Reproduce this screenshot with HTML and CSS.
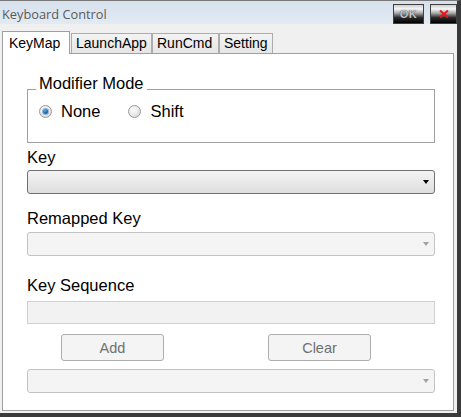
FILE: index.html
```html
<!DOCTYPE html>
<html>
<head>
<meta charset="utf-8">
<link rel="stylesheet" href="styles.css">
</head>
<body>
<div class="window">
  <div class="titlebar">
    <span class="title">Keyboard Control</span>
    <div class="tbtns">
      <button class="tbtn ok">OK</button>
      <button class="tbtn close"><svg width="10" height="8" viewBox="0 0 10 8"><path d="M1 0.5 L9 7.5 M9 0.5 L1 7.5" stroke="#e8141a" stroke-width="2"/></svg></button>
    </div>
  </div>
  <div class="client">
    <div class="tabs">
      <div class="tab active">KeyMap</div>
      <div class="tab t-launch">LaunchApp</div>
      <div class="tab t-run">RunCmd</div>
      <div class="tab t-set">Setting</div>
    </div>
    <div class="panel">
      <fieldset class="group">
        <legend class="legend">Modifier Mode</legend>
        <div class="radios">
          <label class="radio first"><span class="dot on"></span>None</label>
          <label class="radio"><span class="dot"></span>Shift</label>
        </div>
      </fieldset>
      <div class="label l-key">Key</div>
      <div class="combo active-combo c-key"><span class="arrow"></span></div>
      <div class="label l-remap">Remapped Key</div>
      <div class="combo disabled c-remap"><span class="arrow"></span></div>
      <div class="label l-seq">Key Sequence</div>
      <div class="textbox"></div>
      <div class="btnrow">
        <button class="btn">Add</button>
        <button class="btn">Clear</button>
      </div>
      <div class="combo disabled c-bottom"><span class="arrow"></span></div>
    </div>
  </div>
</div>
</body>
</html>
```
FILE: styles.css
```css
html, body {
  margin: 0;
  padding: 0;
  background: #f0f0f0;
}
.window {
  width: 461px;
  height: 417px;
  box-sizing: border-box;
  border-top: 1px solid #7a7a7a;
  border-right: 4px solid #3a3a3a;
  border-bottom: 4px solid #3a3a3a;
  background: #f0f0f0;
  display: flex;
  flex-direction: column;
  overflow: hidden;
  font-family: "Liberation Sans", Arial, sans-serif;
}
.titlebar {
  height: 23px;
  flex: none;
  display: flex;
  justify-content: space-between;
  align-items: flex-start;
  background: linear-gradient(to bottom, #d6e1ec, #e2eaf3);
  padding-left: 2px;
}
.title {
  font-family: "Open Sans", sans-serif;
  font-size: 12.8px;
  line-height: 16px;
  color: #5a5a5a;
  margin-top: 5px;
}
.tbtns {
  display: flex;
  gap: 6px;
  margin-top: 3px;
}
.tbtn {
  height: 20px;
  padding: 0;
  margin: 0;
  border: 1px solid #404040;
  background: linear-gradient(to bottom, #cfcfcf 0%, #f6f6f6 22%, #a8a8a8 45%, #2a2a2a 70%, #000 100%);
  display: flex;
  align-items: center;
  justify-content: center;
}
.ok {
  width: 31px;
  font-family: "Liberation Sans", Arial, sans-serif;
  font-weight: bold;
  font-size: 11px;
  color: #c4c4c4;
  letter-spacing: 0.5px;
  text-shadow: 0 0 1px #222;
}
.close {
  width: 27px;
}
.client {
  flex: 1;
  display: flex;
  flex-direction: column;
  padding: 7px 3px 2px 2px;
}
.tabs {
  display: flex;
  align-items: flex-end;
  height: 22px;
  flex: none;
}
.tab {
  box-sizing: border-box;
  height: 20px;
  font-size: 14px;
  line-height: 18px;
  color: #000;
  border: 1px solid #acacac;
  border-bottom: none;
  background: linear-gradient(to bottom, #f3f3f3, #e6e6e6);
  padding: 0 0 0 4px;
  white-space: nowrap;
}
.t-launch { width: 81px; }
.t-run { width: 67px; }
.t-set { width: 54px; }
.tab.active {
  width: 68px;
  height: 23px;
  background: #fff;
  border-color: #a0a0a0;
  padding: 2px 0 0 6px;
  margin-right: 1px;
  margin-bottom: -1px;
  position: relative;
  z-index: 1;
}
.panel {
  flex: 1;
  background: #fff;
  border: 1px solid #a0a0a0;
  padding: 0 18px 0 24px;
  display: flex;
  flex-direction: column;
}
.group {
  margin: 20px 0 0 0;
  padding: 0 0 23px 11px;
  border: 1px solid #a0a0a0;
  min-width: 0;
}
.legend {
  font-size: 16.5px;
  line-height: 19px;
  padding: 0 3px 11px 3px;
  margin-left: -3px;
  color: #000;
}
.radios {
  display: flex;
  align-items: center;
  height: 15px;
}
.radio {
  display: flex;
  align-items: center;
  font-size: 16.5px;
  line-height: 19px;
  color: #000;
}
.radio.first {
  margin-right: 28px;
}
.dot {
  width: 13px;
  height: 13px;
  box-sizing: border-box;
  border-radius: 50%;
  border: 1px solid #9a9a9a;
  background: radial-gradient(circle at 40% 35%, #fdfdfd 0%, #e6e6e6 55%, #cfcfcf 100%);
  margin-right: 9px;
  display: flex;
  align-items: center;
  justify-content: center;
}
.dot.on::after {
  content: "";
  width: 5px;
  height: 5px;
  border-radius: 50%;
  background: radial-gradient(circle at 40% 35%, #6aaee4 0%, #1f6db5 50%, #0d3f73 100%);
  box-shadow: 0 0 0 1px #8fb3d3;
}
.label {
  font-size: 16.5px;
  line-height: 19px;
  color: #000;
}
.l-key { margin-top: 5px; }
.l-remap { margin-top: 15px; }
.l-seq { margin-top: 20px; }
.combo {
  box-sizing: border-box;
  height: 24px;
  border-radius: 3px;
  display: flex;
  justify-content: flex-end;
  align-items: center;
  padding-right: 5px;
}
.active-combo {
  border: 1px solid #707070;
  background: linear-gradient(to bottom, #f4f4f4, #dedede);
}
.active-combo .arrow {
  border-top: 4px solid #000;
  border-left: 3.5px solid transparent;
  border-right: 3.5px solid transparent;
}
.disabled {
  border: 1px solid #c2c2c2;
  background: #f4f4f4;
}
.disabled .arrow {
  border-top: 4px solid #a2a2a2;
  border-left: 3.5px solid transparent;
  border-right: 3.5px solid transparent;
}
.c-key { margin-top: 3px; }
.c-remap { margin-top: 4px; }
.textbox {
  box-sizing: border-box;
  height: 23px;
  margin-top: 6px;
  border: 1px solid #d0d0d0;
  background: #f2f2f2;
}
.btnrow {
  display: flex;
  gap: 104px;
  padding-left: 34px;
  margin-top: 10px;
}
.btn {
  box-sizing: border-box;
  width: 103px;
  height: 27px;
  border: 1px solid #adadad;
  border-radius: 3px;
  background: #f4f4f4;
  font-family: "Liberation Sans", Arial, sans-serif;
  font-size: 14.5px;
  color: #707070;
  padding: 0;
}
.c-bottom { margin-top: 8px; }
```
